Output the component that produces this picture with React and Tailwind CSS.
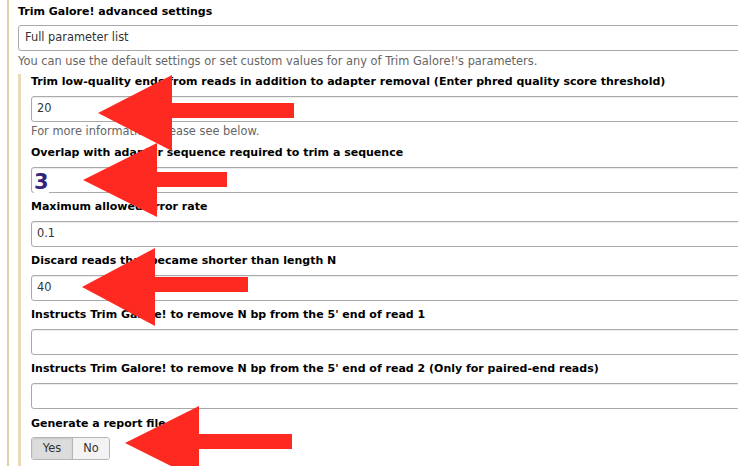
import React from "react";

const font = { fontFamily: '"DejaVu Sans", "Liberation Sans", sans-serif' };

function Field({ label, value, big }) {
  return (
    <div className="mt-[6px]">
      <div className="h-[16px] text-[11px] leading-[16px] font-bold text-black whitespace-nowrap">{label}</div>
      <div className="mt-[6px] h-[26px] w-[760px] rounded-[3px] border border-[#aaaaaa] bg-white shadow-[inset_0_1px_1px_rgba(0,0,0,0.08)] flex items-center px-[5px]">
        {big ? (
          <span className="text-[21px] font-bold text-[#33237a] leading-none mt-[4px] -ml-[3px] bg-white">{value}</span>
        ) : (
          <span className="text-[11.4px] text-[#333]">{value}</span>
        )}
      </div>
    </div>
  );
}

export default function App() {
  return (
    <div className="relative w-[738px] h-[466px] overflow-hidden bg-white" style={font}>
      <div className="ml-[7px] h-full border-l-[2px] border-[#e3cda6] pl-[9px]">
        <div className="pt-[4px] h-[20px] text-[11px] leading-[16px] font-bold text-black">Trim Galore! advanced settings</div>
        <div className="mt-[5px] h-[26px] w-[760px] rounded-[3px] border border-[#aaaaaa] bg-white flex items-center px-[6px] text-[11.4px] text-[#333]">
          Full parameter list
        </div>
        <div className="mt-[2px] text-[11.4px] leading-[16px] text-[#666] whitespace-nowrap">
          You can use the default settings or set custom values for any of Trim Galore!'s parameters.
        </div>
        <div className="mt-[5px] border-l-[3px] border-[#ecd9b6] pl-[10px] pb-[20px]">
          <div className="h-[16px] text-[11px] leading-[16px] font-bold text-black whitespace-nowrap">
            Trim low-quality ends from reads in addition to adapter removal (Enter phred quality score threshold)
          </div>
          <div className="mt-[6px] h-[26px] w-[760px] rounded-[3px] border border-[#aaaaaa] bg-white shadow-[inset_0_1px_1px_rgba(0,0,0,0.08)] flex items-center px-[5px] text-[11.4px] text-[#333]">
            20
          </div>
          <div className="mt-[1px] h-[16px] text-[11.4px] leading-[16px] text-[#666] whitespace-nowrap">
            For more information, please see below.
          </div>
          <div className="mt-[1px]">
            <Field label="Overlap with adapter sequence required to trim a sequence" value="3" big />
          </div>
          <Field label="Maximum allowed error rate" value="0.1" />
          <Field label="Discard reads that became shorter than length N" value="40" />
          <Field label="Instructs Trim Galore! to remove N bp from the 5' end of read 1" value="" />
          <Field label="Instructs Trim Galore! to remove N bp from the 5' end of read 2 (Only for paired-end reads)" value="" />
          <div className="mt-[7px] h-[16px] text-[11px] leading-[16px] font-bold text-black">Generate a report file</div>
          <div className="mt-[5px] flex h-[23px] w-[79px] rounded-[3px] border border-[#b5b5b5] overflow-hidden text-[11.4px] text-[#333]">
            <div className="w-[41px] flex items-center justify-center bg-[#dcdcdc] border-r border-[#b5b5b5] shadow-[inset_0_1px_2px_rgba(0,0,0,0.1)]">Yes</div>
            <div className="flex-1 flex items-center justify-center bg-[#f3f3f3]">No</div>
          </div>
        </div>
      </div>
      <svg className="absolute left-0 top-0 pointer-events-none" width="738" height="466" viewBox="0 0 738 466">
        <g fill="#fe2a22">
          <polygon points="98,113 172,75 172,103 294,103 294,118 172,118 172,151" />
          <polygon points="83,180 157,143 157,172 227,172 227,187 157,187 157,217" />
          <polygon points="82,287 155,248 155,277 248,277 248,292 155,292 155,326" />
          <polygon points="125,443 199,406 199,434 292,434 292,449 199,449 199,480" />
        </g>
      </svg>
    </div>
  );
}
